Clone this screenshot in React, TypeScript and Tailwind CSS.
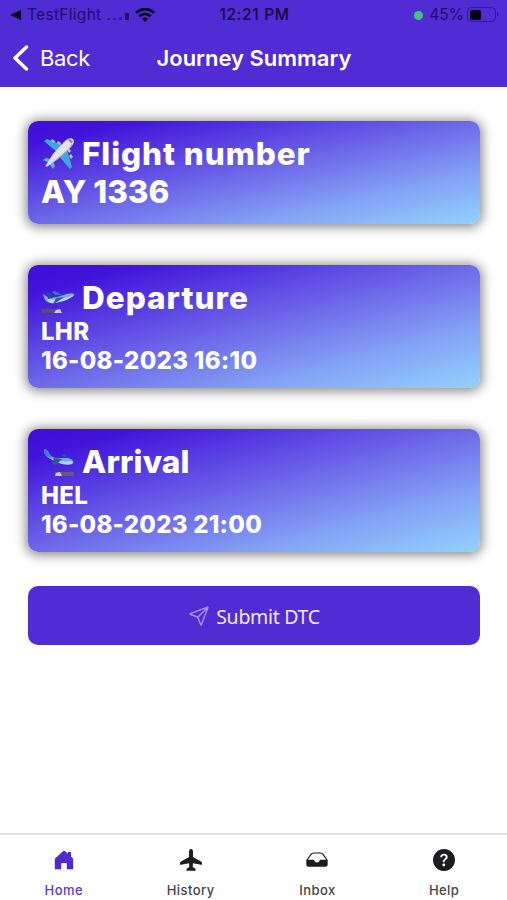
import type { ReactNode } from 'react';
import { IoPaperPlaneOutline } from 'react-icons/io5';
import { BsQuestionCircleFill } from 'react-icons/bs';

function Plane() {
  return (
    <svg viewBox="0 0 34 34" className="h-[34px] w-[34px]">
      <path d="M3 4 6 2 24 9 18 17Z" fill="#42a5dc" />
      <path d="M31 30 29 32 17 18 25 9Z" fill="#42a5dc" />
      <path d="M2 23 5 21 13 23 10 27Z" fill="#54b5e5" />
      <path d="M12 32 14 29 11 22 7 25Z" fill="#54b5e5" />
      <path d="m11 2 3 2-1 2-3-2ZM17 4l3 2-1 2-3-2ZM30 17l2 3-2 2-2-3ZM28 11l2 3-2 2-2-3Z" fill="#a9c7dc" />
      <path d="M32 2c-3-2-7 1-9 3L12 17 5 28c-1 2 0 2 2 1l10-7L29 11c3-3 5-6 3-9Z" fill="#e2e2e8" />
      <path d="M31 6c-2 5-7 9-12 13L7 29l10-7L29 11c2-2 3-3 2-5Z" fill="#a8a9bd" />
      <path d="m29 2 3 3-2 1-3-3Z" fill="#777f9b" />
    </svg>
  );
}

function Jet({ landing = false }: { landing?: boolean }) {
  return (
    <svg viewBox="0 0 34 34" className="h-[34px] w-[34px]">
      {landing ? (
        <>
          <path d="M3 4c3 0 4 2 6 6 3 3 6 3 10 3l8 0c4 1 6 3 5 5-5 3-17 0-24-5-4-2-5-5-5-9Z" fill="#6aa9e4" />
          <path d="M9 13c7 3 14 4 22 3 2 1 1 2 0 3-6 2-16-1-22-6Z" fill="#b5d1ed" />
          <path d="m3 4 3 1 4 8-6-3Z" fill="#347ed1" />
          <path d="m13 13 8 1-6 6-4-1Z" fill="#31568c" />
          <path d="m20 10 4-1 2 4Z" fill="#36577c" />
          <path d="M14 27h19v4H14Z" fill="#655c76" />
          <path d="m14 31 1-3 4-1 2 4Z" fill="#d0cce4" />
        </>
      ) : (
        <>
          <path d="m2 13 6 4 8-1 10-3c4-1 7-1 7 1-3 4-17 9-24 8-4-1-6-4-7-9Z" fill="#78afe0" />
          <path d="m6 18 12 1 15-5c-3 4-17 9-24 8Z" fill="#bfd7ec" />
          <path d="m6 11 3 1 3 5-5 1Z" fill="#204f9a" />
          <path d="m14 14-3-3 3-1 7 4Z" fill="#3974b9" />
          <path d="m15 17 8-1-7 5-4 2Z" fill="#315d91" />
          <path d="M1 28h19v4H1Z" fill="#59506b" />
          <path d="m13 32 2-3 4-1 2 4Z" fill="#cec7df" />
        </>
      )}
    </svg>
  );
}

function Card({ icon, title, tracking, children, className }: { icon: ReactNode; title: string; tracking: string; children: ReactNode; className: string }) {
  return (
    <section className={`rounded-[10px] bg-[linear-gradient(to_bottom_right,#3d0fd7_0%,#4214da_12%,#6e69e9_50%,#83a3f5_75%,#93d2fc_100%)] pr-[14px] pl-[13px] font-extrabold text-white shadow-[0_1px_12px_2px_rgba(0,0,0,0.48)] ${className}`}>
      <div className="flex h-[38px] items-center">
        <span className="mr-[7px] w-[34px] shrink-0">{icon}</span>
        <h2 className={`text-[31.5px] leading-[38px] whitespace-nowrap ${tracking}`}>{title}</h2>
      </div>
      {children}
    </section>
  );
}

function Home() {
  return (
    <svg viewBox="0 0 20 20" className="ml-[2px] h-5 w-5" fill="currentColor">
      <path d="M.8 8.8 8.9 1.3q1.1-1 2.2 0L14 3.8V2h3v4.5l2.2 2.3v10.4h-6.4v-5.4q0-.8-.8-.8H8q-.8 0-.8.8v5.4H.8Z" />
    </svg>
  );
}

function Airplane() {
  return (
    <svg viewBox="0 0 22 22" className="ml-[2px] h-[22px] w-[22px]" fill="currentColor">
      <path d="M11 0q2 0 2 3v5l8 4.4q1 .6 1 1.5v1.3q0 .8-1 .5l-8-1.5-.3 3.8 2.3 1.5q.6.5.6 1.2v1H6.4v-1q0-.7.6-1.2L9.3 18 9 14.2l-8 1.5q-1 .3-1-.5v-1.3q0-.9 1-1.5L9 8V3q0-3 2-3Z" />
    </svg>
  );
}

function Inbox() {
  return (
    <svg viewBox="0 0 22 16" className="ml-px h-4 w-[22px]">
      <path d="M1 8 5 2.3Q5.9 1 7.3 1h7.4q1.4 0 2.3 1.3L21 8" fill="none" stroke="currentColor" strokeWidth="1.2" />
      <path d="M.3 7.8h7.2q.7 0 .9 1 .4 1.8 2.6 1.8t2.6-1.8q.2-1 .9-1h7.2v4.5q0 2.5-2.5 2.5H2.8q-2.5 0-2.5-2.5Z" fill="currentColor" />
    </svg>
  );
}

function Tab({ icon, label, active = false }: { icon: ReactNode; label: string; active?: boolean }) {
  return (
    <div className={`flex flex-1 flex-col items-center pt-[13px] ${active ? 'text-[#512bd0]' : 'text-[#1d1d1f]'}`}>
      <span className="flex h-6 items-center">{icon}</span>
      <span className={`mt-[9px] ml-px text-[13px] leading-[18px] font-medium tracking-[0.45px] ${active ? 'text-[#5c3cc4]' : 'text-[#444446]'}`}>{label}</span>
    </div>
  );
}

export default function App() {
  return (
    <div className="flex h-[900px] w-[507px] flex-col overflow-hidden bg-white font-['Inter','Liberation_Sans',sans-serif]">
      <header className="h-[87px] bg-[#512bd3]">
        <div className="grid h-[29px] grid-cols-[1fr_auto_1fr] items-center pt-px pl-[10px] pr-[8px] text-[#210b69]">
          <div className="flex items-center">
            <svg viewBox="0 0 11 10" className="mr-[6px] h-[10px] w-[11px]" fill="#0a0528"><path d="M0 5 11 0v10Z" /></svg>
            <span className="text-[15.5px] tracking-[0.3px]">TestFlight</span>
            <svg viewBox="0 0 22 8" className="mt-[3px] ml-[6px] h-2 w-[22px]" fill="#391998">
              <path d="M0 5h3v2H0ZM6 5h3v2H6ZM12 4h3v3h-3Z" /><rect x="18" width="4" height="7" rx="1" fill="#241067" />
            </svg>
            <svg viewBox="0 0 20 14" className="ml-[6px] h-[14px] w-5" fill="none" stroke="#080321" strokeWidth="2.8">
              <path d="M1 4.8Q10-2.8 19 4.8M4.2 8.3q5.8-4.9 11.6 0" /><path d="m6.8 10.8 3.2 3.2 3.2-3.2q-3.2-2.4-6.4 0Z" fill="#080321" stroke="none" />
            </svg>
          </div>
          <span className="text-[15.5px] font-medium tracking-[0.65px] text-[#14073f]">12:21 PM</span>
          <div className="flex items-center justify-end">
            <span className="mr-[6px] h-[9px] w-[9px] shrink-0 rounded-full bg-[#42c577]" />
            <span className="text-[15.5px]">45%</span>
            <svg viewBox="0 0 33 16" className="ml-[3px] h-4 w-[33px] -mr-px shrink-0">
              <rect x=".5" y=".5" width="28" height="14" rx="4" fill="none" stroke="#321696" />
              <rect x="3" y="3" width="11" height="10" rx="2" fill="#05020f" /><path d="M30 5q3 2.5 0 5Z" fill="#321696" />
            </svg>
          </div>
        </div>
        <div className="grid h-[58px] grid-cols-[1fr_auto_1fr] items-center pl-[13px] text-white">
          <div className="flex items-center">
            <svg viewBox="0 0 16 26" className="h-[26px] w-4" fill="none" stroke="white" strokeWidth="3.4" strokeLinecap="round" strokeLinejoin="round"><path d="M13.5 2 2 13l11.5 11" /></svg>
            <span className="ml-[11px] text-[22px] tracking-[-0.35px]">Back</span>
          </div>
          <h1 className="mr-[12px] text-[22px] font-semibold tracking-[-0.02px]">Journey Summary</h1>
          <span />
        </div>
      </header>
      <main className="flex flex-1 flex-col px-7 pr-[27px] pt-[34px]">
        <Card icon={<Plane />} title="Flight number" tracking="tracking-[0.92px]" className="h-[103px] pt-[14px]">
          <p className="text-[31.5px] leading-[38px] tracking-[0px]">AY 1336</p>
        </Card>
        <Card icon={<Jet />} title="Departure" tracking="tracking-[1px]" className="mt-[41px] h-[123px] pt-[14px]">
          <p className="text-[24px] leading-[29px] tracking-[0.3px]">LHR</p>
          <p className="text-[24px] leading-[29px] tracking-[0.3px]">16-08-2023 16:10</p>
        </Card>
        <Card icon={<Jet landing />} title="Arrival" tracking="tracking-[0.2px]" className="mt-[41px] h-[123px] pt-[14px]">
          <p className="text-[24px] leading-[29px] tracking-[0.3px]">HEL</p>
          <p className="text-[24px] leading-[29px] tracking-[0.25px]">16-08-2023 21:00</p>
        </Card>
        <button className="mt-[34px] flex h-[59px] items-center justify-center rounded-[10px] bg-[#512bd3] pt-[2px] font-['Noto_Sans',sans-serif] text-[19.5px] text-[#f2e8ff]">
          <IoPaperPlaneOutline className="mr-[6px] -mt-px h-[22px] w-[22px] text-[#aa98ff]" />
          <span className="tracking-[-0.3px]">Submit DTC</span>
        </button>
      </main>
      <nav className="flex h-[67px] border-t-2 border-[#e1e1e3]">
        <Tab icon={<Home />} label="Home" active />
        <Tab icon={<Airplane />} label="History" />
        <Tab icon={<Inbox />} label="Inbox" />
        <Tab icon={<BsQuestionCircleFill className="h-[22px] w-[22px]" />} label="Help" />
      </nav>
    </div>
  );
}
